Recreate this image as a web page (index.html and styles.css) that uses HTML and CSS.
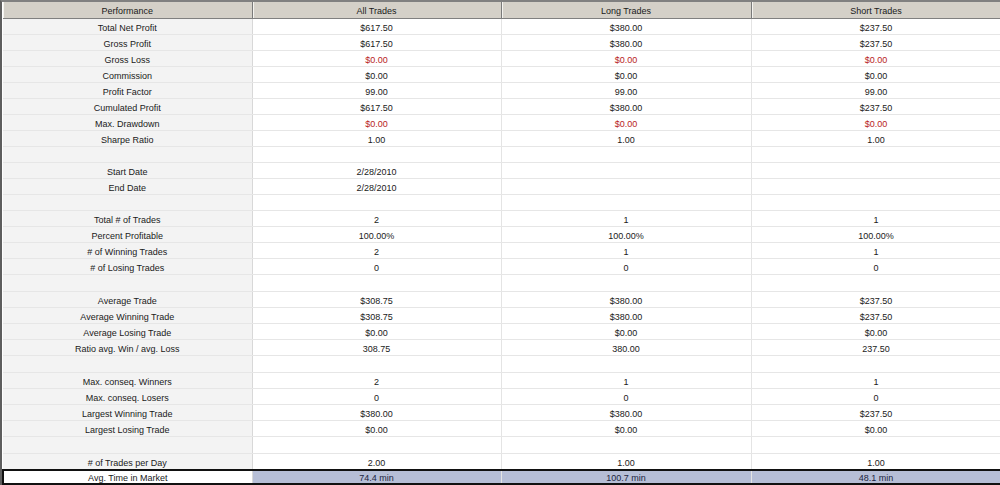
FILE: index.html
```html
<!DOCTYPE html>
<html>
<head>
<meta charset="utf-8">
<link rel="stylesheet" href="styles.css">
</head>
<body>
<div class="frame">
<table class="perf">
<colgroup><col class="c1"><col class="c2"><col class="c3"><col class="c4"></colgroup>
<thead>
<tr><th>Performance</th><th>All Trades</th><th>Long Trades</th><th>Short Trades</th></tr>
</thead>
<tbody>
<tr><td>Total Net Profit</td><td>$617.50</td><td>$380.00</td><td>$237.50</td></tr>
<tr><td>Gross Profit</td><td>$617.50</td><td>$380.00</td><td>$237.50</td></tr>
<tr><td>Gross Loss</td><td class="neg">$0.00</td><td class="neg">$0.00</td><td class="neg">$0.00</td></tr>
<tr><td>Commission</td><td>$0.00</td><td>$0.00</td><td>$0.00</td></tr>
<tr><td>Profit Factor</td><td>99.00</td><td>99.00</td><td>99.00</td></tr>
<tr><td>Cumulated Profit</td><td>$617.50</td><td>$380.00</td><td>$237.50</td></tr>
<tr><td>Max. Drawdown</td><td class="neg">$0.00</td><td class="neg">$0.00</td><td class="neg">$0.00</td></tr>
<tr><td>Sharpe Ratio</td><td>1.00</td><td>1.00</td><td>1.00</td></tr>
<tr><td></td><td></td><td></td><td></td></tr>
<tr><td>Start Date</td><td>2/28/2010</td><td></td><td></td></tr>
<tr><td>End Date</td><td>2/28/2010</td><td></td><td></td></tr>
<tr><td></td><td></td><td></td><td></td></tr>
<tr><td>Total # of Trades</td><td>2</td><td>1</td><td>1</td></tr>
<tr><td>Percent Profitable</td><td>100.00%</td><td>100.00%</td><td>100.00%</td></tr>
<tr><td># of Winning Trades</td><td>2</td><td>1</td><td>1</td></tr>
<tr><td># of Losing Trades</td><td>0</td><td>0</td><td>0</td></tr>
<tr class="gap"><td></td><td></td><td></td><td></td></tr>
<tr><td>Average Trade</td><td>$308.75</td><td>$380.00</td><td>$237.50</td></tr>
<tr><td>Average Winning Trade</td><td>$308.75</td><td>$380.00</td><td>$237.50</td></tr>
<tr><td>Average Losing Trade</td><td>$0.00</td><td>$0.00</td><td>$0.00</td></tr>
<tr><td>Ratio avg. Win / avg. Loss</td><td>308.75</td><td>380.00</td><td>237.50</td></tr>
<tr class="gap"><td></td><td></td><td></td><td></td></tr>
<tr><td>Max. conseq. Winners</td><td>2</td><td>1</td><td>1</td></tr>
<tr><td>Max. conseq. Losers</td><td>0</td><td>0</td><td>0</td></tr>
<tr><td>Largest Winning Trade</td><td>$380.00</td><td>$380.00</td><td>$237.50</td></tr>
<tr><td>Largest Losing Trade</td><td>$0.00</td><td>$0.00</td><td>$0.00</td></tr>
<tr class="gap"><td></td><td></td><td></td><td></td></tr>
<tr><td># of Trades per Day</td><td>2.00</td><td>1.00</td><td>1.00</td></tr>
<tr class="sel"><td>Avg. Time in Market</td><td>74.4 min</td><td>100.7 min</td><td>48.1 min</td></tr>
</tbody>
</table>
</div>
</body>
</html>
```
FILE: styles.css
```css
html, body {
  margin: 0;
  padding: 0;
  background: #ffffff;
}
.frame {
  width: 998px;
  height: 483px;
  border-left: 2px solid #5e5e5e;
  border-top: 2px solid #808080;
  overflow: hidden;
}
.perf {
  border-collapse: collapse;
  table-layout: fixed;
  width: 998px;
  font-family: "Liberation Sans", Arial, sans-serif;
  font-size: 9px;
  color: #1a1a1a;
}
.c1 { width: 249px; }
.c2 { width: 249px; }
.c3 { width: 250px; }
.c4 { width: 250px; }
.perf th {
  height: 14px;
  padding: 2px 0 0;
  font-weight: normal;
  background: #d4d0c8;
  border-right: 1px solid #7a7a7a;
  border-bottom: 1px solid #808080;
  box-shadow: inset 1px 0 0 #f4f3ef;
  text-align: center;
}
.perf td {
  height: 13px;
  padding: 2px 0 0;
  text-align: center;
  background: #ffffff;
  border-right: 1px solid #e4e4e4;
  border-bottom: 1px solid #e6e6e6;
  white-space: nowrap;
}
.perf tr.gap td {
  height: 14px;
}
.perf td:first-child {
  background: #f3f3f3;
  border-right: 1px solid #d8d8d8;
}
.perf td.neg {
  color: #b81c1c;
}
.perf tr.sel td {
  height: 11px;
  padding-top: 1px;
  border-top: 2px solid #111111;
  border-bottom: 2px solid #111111;
  background: #b6bed6;
  color: #1c2540;
}
.perf tr.sel td:first-child {
  background: #ffffff;
  border-left: 2px solid #111111;
  color: #1a1a1a;
}
```
